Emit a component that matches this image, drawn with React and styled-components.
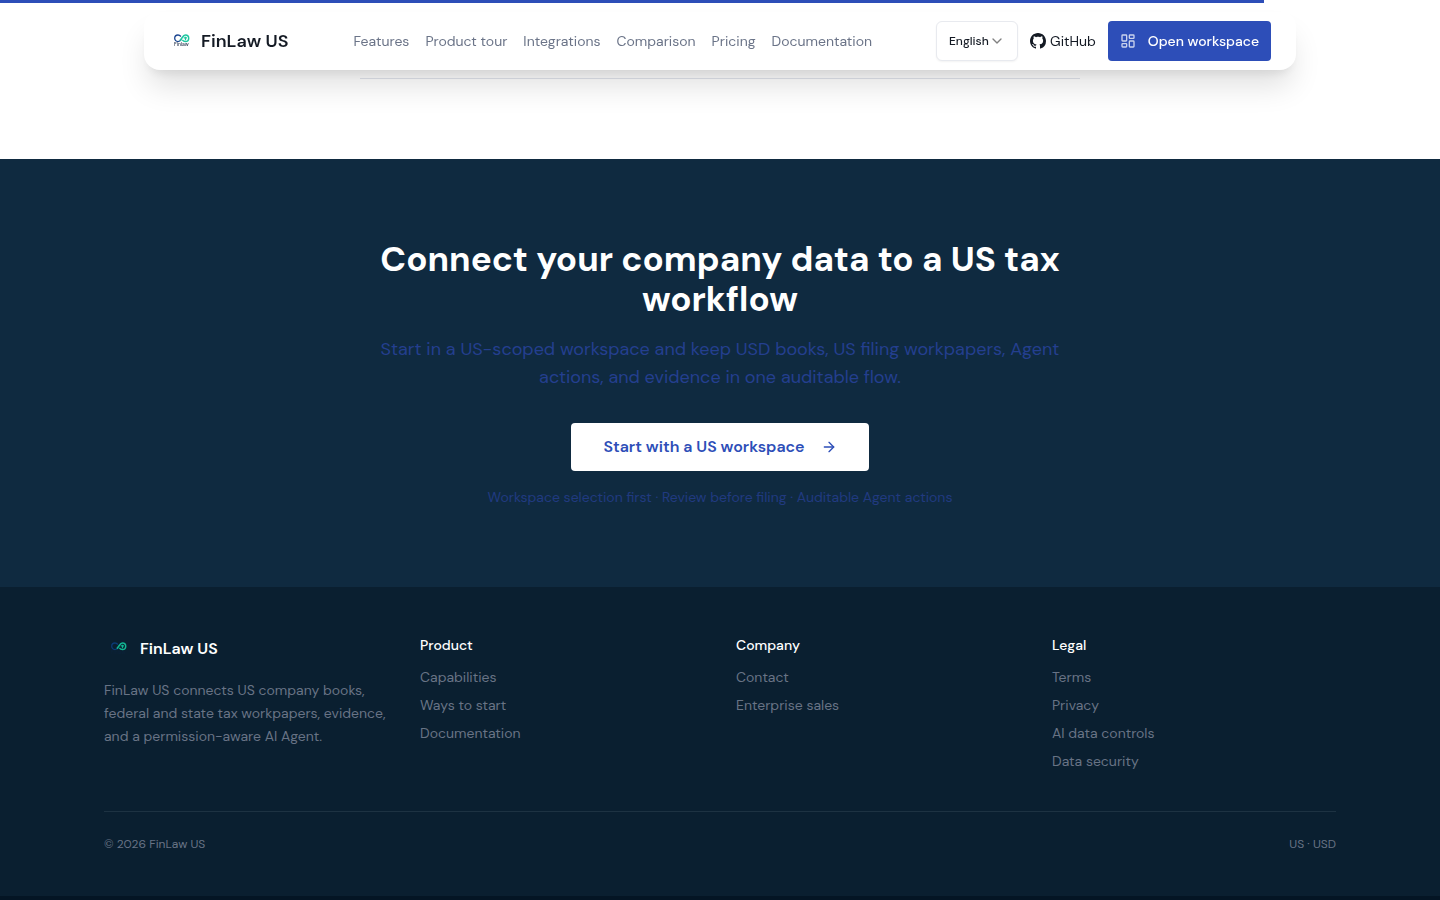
import React from "react";
import styled, { createGlobalStyle } from "styled-components";
import { ArrowRight, ChevronDown, LayoutDashboard } from "lucide-react";

const GlobalStyle = createGlobalStyle`
  *, *::before, *::after {
    box-sizing: border-box;
  }
  body {
    margin: 0;
    background: #041524;
    color: #141a24;
    font-family: "DM Sans", Inter, "Liberation Sans", sans-serif;
    font-size: 14px;
    line-height: 20px;
  }
  h2, h3, p, ul {
    margin: 0;
    padding: 0;
  }
  a {
    color: inherit;
    text-decoration: none;
  }
`;

const Progress = styled.div`
  position: fixed;
  top: 0;
  left: 0;
  z-index: 20;
  height: 3px;
  background: #2d4eb8;
`;
const Header = styled.header`
  position: fixed;
  top: 12px;
  left: 0;
  right: 0;
  z-index: 10;
  width: 80%;
  height: 58px;
  margin: 0 auto;
  padding: 0 25px 0 23px;
  display: flex;
  align-items: center;
  background: #ffffff;
  border-radius: 16px;
  box-shadow: 0 20px 30px -4px rgba(0, 0, 0, 0.12),
    0 8px 12px -6px rgba(0, 0, 0, 0.1);
`;
const Brand = styled.a`
  display: flex;
  align-items: center;
  gap: 6px;
  font-size: 18px;
  line-height: 28px;
  font-weight: 600;
`;
const Nav = styled.nav`
  display: flex;
  flex: 1;
  gap: 16px;
  margin-left: 65px;
  color: #6b7488;
`;
const Actions = styled.div`
  display: flex;
  align-items: center;
  gap: 12px;
`;
const LanguageBox = styled.div`
  display: grid;
  align-items: center;
  width: 82px;

  & > * {
    grid-area: 1 / 1;
  }
  svg {
    justify-self: end;
    margin-right: 13px;
    color: #808080;
    pointer-events: none;
  }
`;
const Language = styled.select`
  appearance: none;
  width: 100%;
  height: 40px;
  padding: 0 12px;
  border: 1px solid #e8eaef;
  border-radius: 6px;
  background: #ffffff;
  box-shadow: 0 1px 2px rgba(0, 0, 0, 0.05);
  color: #141a24;
  font-family: inherit;
  font-size: 12px;
  font-weight: 500;
`;
const GithubLink = styled.a`
  display: flex;
  align-items: center;
  gap: 4px;
`;
const OpenButton = styled.button`
  display: flex;
  align-items: center;
  gap: 12px;
  height: 40px;
  padding: 0 12px;
  border: 0;
  border-radius: 4px;
  background: #2d4eb8;
  color: #ffffff;
  font: inherit;
  font-weight: 500;

  svg {
    opacity: 0.75;
  }
`;

const Faq = styled.section`
  padding: 78px 24px 80px;
  background: #ffffff;
`;
const FaqEnd = styled.div`
  max-width: 720px;
  margin: 0 auto;
  border-top: 1px solid #e1e4ec;
`;
const Cta = styled.section`
  display: flex;
  flex-direction: column;
  align-items: center;
  padding: 80px 24px;
  background: #0f2a40;
  color: #243f8f;
  text-align: center;
`;
const Title = styled.h2`
  max-width: 720px;
  color: #ffffff;
  font-size: 35px;
  line-height: 40px;
  font-weight: 700;
`;
const Lead = styled.p`
  max-width: 720px;
  margin-top: 16px;
  font-size: 18px;
  line-height: 28px;
`;
const StartButton = styled.button`
  display: flex;
  align-items: center;
  gap: 16px;
  height: 48px;
  margin-top: 32px;
  padding: 0 32px;
  border: 0;
  border-radius: 4px;
  background: #ffffff;
  color: #2d4eb8;
  font: inherit;
  font-size: 16px;
  font-weight: 600;
`;
const Note = styled.p`
  margin-top: 16px;
  color: #213a80;
`;

const Footer = styled.footer`
  padding: 48px 24px 40px;
  background: #0a1f30;
  color: #687385;
`;
const FooterInner = styled.div`
  max-width: 1232px;
  margin: 0 auto;
`;
const Columns = styled.div`
  display: grid;
  grid-template-columns: repeat(4, 1fr);
  gap: 32px;
  padding-bottom: 40px;
`;
const FooterBrand = styled(Brand)`
  gap: 8px;
  color: #ffffff;
  font-size: 16px;
`;
const About = styled.p`
  margin-top: 16px;
  line-height: 23px;
`;
const ColumnTitle = styled.h3`
  color: #ffffff;
  font-size: 14px;
  line-height: 20px;
  font-weight: 500;
`;
const LinkList = styled.ul`
  display: flex;
  flex-direction: column;
  gap: 8px;
  margin-top: 12px;
  list-style: none;
`;
const Legal = styled.div`
  display: flex;
  justify-content: space-between;
  padding: 24px 0 4px;
  border-top: 1px solid #1d3242;
  font-size: 12px;
  line-height: 16px;
`;

const navLinks = [
  "Features",
  "Product tour",
  "Integrations",
  "Comparison",
  "Pricing",
  "Documentation",
];
const footerColumns = [
  { title: "Product", links: ["Capabilities", "Ways to start", "Documentation"] },
  { title: "Company", links: ["Contact", "Enterprise sales"] },
  {
    title: "Legal",
    links: ["Terms", "Privacy", "AI data controls", "Data security"],
  },
];

function Logo({ left, right, word }) {
  return (
    <svg width="28" height="28" viewBox="0 0 28 28" aria-hidden="true">
      <path
        d="M14.4 12.4c-1 1.4-2 2.2-3.4 2.2a3.3 3.3 0 1 1 0-6.6c1.3 0 2.1.6 2.9 1.5"
        fill="none"
        stroke={left}
        strokeWidth="1.3"
      />
      <path
        d="M12.8 13.6c2.1-1.5 2.9-5.6 5.6-5.6a3.3 3.3 0 1 1 0 6.6c-1.4 0-2.3-.6-3.1-1.7"
        fill="none"
        stroke={right}
        strokeWidth="1.5"
      />
      <path d="M16.8 10.8h3.2M18.5 9.8v3.4" stroke={right} strokeWidth="1.2" />
      <text
        x="14.4"
        y="19.4"
        textAnchor="middle"
        fill={word}
        fontFamily="DM Sans, Inter, sans-serif"
        fontSize="5"
        fontWeight="500"
      >
        Finlaw
      </text>
    </svg>
  );
}

function GithubMark() {
  return (
    <svg width="16" height="16" viewBox="0 0 16 16" fill="currentColor" aria-hidden="true">
      <path d="M8 0C3.58 0 0 3.58 0 8c0 3.54 2.29 6.53 5.47 7.59.4.07.55-.17.55-.38 0-.19-.01-.82-.01-1.49-2.01.37-2.53-.49-2.69-.94-.09-.23-.48-.94-.82-1.13-.28-.15-.68-.52-.01-.53.63-.01 1.08.58 1.23.82.72 1.21 1.87.87 2.33.66.07-.52.28-.87.51-1.07-1.78-.2-3.64-.89-3.64-3.95 0-.87.31-1.59.82-2.15-.08-.2-.36-1.02.08-2.12 0 0 .67-.21 2.2.82.64-.18 1.32-.27 2-.27s1.36.09 2 .27c1.53-1.04 2.2-.82 2.2-.82.44 1.1.16 1.92.08 2.12.51.56.82 1.27.82 2.15 0 3.07-1.87 3.75-3.65 3.95.29.25.54.73.54 1.48 0 1.07-.01 1.93-.01 2.2 0 .21.15.46.55.38A8.01 8.01 0 0 0 16 8c0-4.42-3.58-8-8-8Z" />
    </svg>
  );
}

export default function App() {
  return (
    <>
      <GlobalStyle />
      <Progress style={{ width: "87.8%" }} />
      <Header>
        <Brand href="#">
          <Logo left="#1a4590" right="#1fc7a0" word="#26344d" />
          FinLaw US
        </Brand>
        <Nav>
          {navLinks.map((label) => (
            <a href="#" key={label}>
              {label}
            </a>
          ))}
        </Nav>
        <Actions>
          <LanguageBox>
            <Language aria-label="Language">
              <option>English</option>
            </Language>
            <ChevronDown size={16} />
          </LanguageBox>
          <GithubLink href="#">
            <GithubMark />
            GitHub
          </GithubLink>
          <OpenButton>
            <LayoutDashboard size={16} />
            Open workspace
          </OpenButton>
        </Actions>
      </Header>
      <main>
        <Faq>
          <FaqEnd />
        </Faq>
        <Cta>
          <Title>Connect your company data to a US tax workflow</Title>
          <Lead>
            Start in a US-scoped workspace and keep USD books, US filing
            workpapers, Agent actions, and evidence in one auditable flow.
          </Lead>
          <StartButton>
            Start with a US workspace
            <ArrowRight size={16} />
          </StartButton>
          <Note>
            Workspace selection first · Review before filing · Auditable Agent
            actions
          </Note>
        </Cta>
      </main>
      <Footer>
        <FooterInner>
          <Columns>
            <div>
              <FooterBrand href="#">
                <Logo left="#0b3a75" right="#12b592" word="#0b2138" />
                FinLaw US
              </FooterBrand>
              <About>
                FinLaw US connects US company books, federal and state tax
                workpapers, evidence, and a permission-aware AI Agent.
              </About>
            </div>
            {footerColumns.map((column) => (
              <div key={column.title}>
                <ColumnTitle>{column.title}</ColumnTitle>
                <LinkList>
                  {column.links.map((label) => (
                    <li key={label}>
                      <a href="#">{label}</a>
                    </li>
                  ))}
                </LinkList>
              </div>
            ))}
          </Columns>
          <Legal>
            <span>© 2026 FinLaw US</span>
            <span>US · USD</span>
          </Legal>
        </FooterInner>
      </Footer>
    </>
  );
}
